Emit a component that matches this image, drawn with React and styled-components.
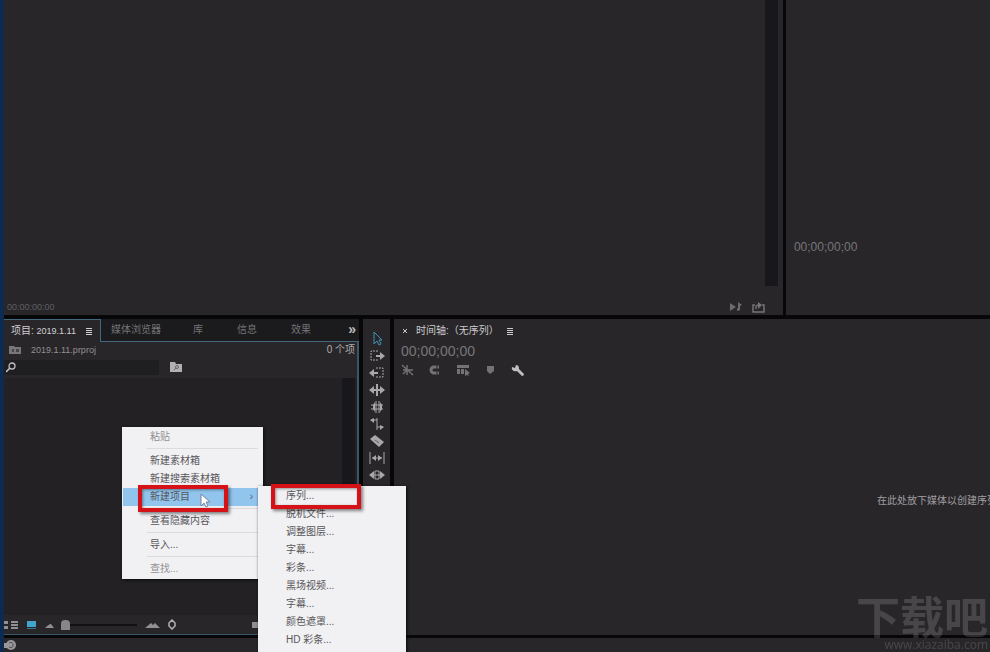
import styled, { createGlobalStyle, css } from "styled-components";

const GlobalStyle = createGlobalStyle`
  * {
    box-sizing: border-box;
  }
  body {
    margin: 0;
    overflow: hidden;
    background: #070709;
    color: #929193;
    font: 10px/18px "Liberation Sans", "Noto Sans CJK SC", sans-serif;
  }
  button,
  input {
    margin: 0;
    padding: 0;
    border: 0;
    background: none;
    color: inherit;
    font: inherit;
  }
  svg {
    display: block;
    flex: none;
  }
`;

const Window = styled.div`
  display: flex;
  flex-direction: column;
  height: 100vh;
  border-left: 4px solid #0d2b51;
  overflow: hidden;
`;

const Panel = styled.section`
  display: flex;
  flex-direction: column;
  min-width: 0;
  background: #282629;
`;

const Monitors = styled.div`
  display: flex;
  flex: 0 1 315px;
  min-height: 0;
  gap: 3px;
`;

const Source = styled(Panel)`
  flex: 0 0 79%;
`;

const SourceBody = styled.div`
  display: flex;
  flex: 1;
  justify-content: flex-end;
  padding-right: 5px;
`;

const Track = styled.div`
  width: 13px;
  margin-bottom: 13px;
  background: #18171b;
`;

const SourceBar = styled.div`
  display: flex;
  align-items: center;
  gap: 9px;
  height: 16px;
  padding: 0 18px 0 3px;
`;

const Program = styled(Panel)`
  flex: 1;
  padding: 238px 8px 0;
`;

const Timecode = styled.span`
  flex: ${({ $grow }) => ($grow ? 1 : "none")};
  color: ${({ $dim }) => ($dim ? "#5f5e61" : "#777679")};
  font-size: ${({ $size }) => $size}px;
`;

const Workspace = styled.div`
  display: flex;
  flex: 1;
  min-height: 0;
  gap: 4px;
  margin-top: 4px;
`;

const Project = styled(Panel)`
  flex: 0 0 355px;
`;

const Tabs = styled.div`
  display: flex;
  height: 23px;
  background: #1b1a1d;
`;

const Tab = styled.button`
  width: ${({ $width }) => $width}px;
  padding-left: 10px;
  border-bottom: 1px solid #41677c;
  color: #757477;
  text-align: left;
  white-space: nowrap;
  ${({ $active }) =>
    $active &&
    css`
      display: flex;
      align-items: center;
      gap: 10px;
      padding-left: 7px;
      border: 1px solid #41677c;
      border-width: 1px 1px 0 0;
      background: #282629;
      color: #d0cfd1;
    `}
`;

const MoreTabs = styled(Tab)`
  flex: 1;
  padding: 0 3px 2px 0;
  color: #bdbcbe;
  font-size: 14px;
  font-weight: 700;
  text-align: right;
`;

const Small = styled.span`
  font-size: 9px;
`;

const ProjectBody = styled.div`
  display: flex;
  flex: 1;
  flex-direction: column;
  min-height: 0;
  border-right: 2px solid #385767;
  border-bottom: 1px solid #385767;
`;

const PathRow = styled.div`
  display: flex;
  align-items: center;
  gap: 10px;
  height: 16px;
  padding: 0 2px 0 5px;
`;

const Count = styled.span`
  margin-left: auto;
  color: #b0afb1;
`;

const SearchRow = styled.div`
  display: flex;
  align-items: center;
  gap: 11px;
  height: 18px;
`;

const SearchBox = styled.label`
  display: flex;
  align-items: center;
  width: 155px;
  height: 15px;
  padding-left: 2px;
  background: #1f1e21;

  input {
    width: 130px;
    outline: 0;
  }
`;

const Bin = styled.div`
  position: relative;
  flex: 1;
  margin-top: 2px;
  padding-right: 2px;
  background: #232124;

  ${Track} {
    height: 100%;
    margin: 0 0 0 auto;
  }
`;

const Footer = styled.div`
  display: flex;
  align-items: center;
  height: 19px;
  color: #909092;
`;

const IconButton = styled.button`
  display: flex;
  flex: none;
  margin-left: ${({ $gap = 0 }) => $gap}px;
`;

const Zoom = styled.input`
  appearance: none;
  width: 76px;
  height: 12px;
  margin: 0 8px 0 6px;

  &::-webkit-slider-runnable-track {
    height: 2px;
    background: #111013;
  }
  &::-webkit-slider-thumb {
    appearance: none;
    width: 9px;
    height: 10px;
    margin-top: -4px;
    border-radius: 4px 4px 0 0;
    background: #87868a;
  }
`;

const Tools = styled(Panel)`
  flex: 0 0 27px;
  align-items: center;
  gap: 1px;
  padding-top: 12px;
  color: #a8a7a9;
`;

const Timeline = styled(Panel)`
  flex: 1;
`;

const TimelineTitle = styled.div`
  display: flex;
  align-items: center;
  gap: 8px;
  height: 23px;
  padding-left: 8px;
  color: #cccbcd;
`;

const TimelineTime = styled.div`
  height: 19px;
  padding-left: 7px;
`;

const TimelineTools = styled.div`
  display: flex;
  align-items: center;
  gap: 14px;
  height: 18px;
  padding-left: 7px;
  color: #737275;
`;

const DropHint = styled.p`
  margin: 113px 0 0;
  padding-left: 483px;
  overflow: hidden;
  color: #a09fa1;
  white-space: nowrap;
`;

const StatusBar = styled.footer`
  flex: none;
  height: 14px;
  margin-top: 3px;
  padding: 1px 0;
  background: #282629;
  color: #98979a;
`;

const Menu = styled.div`
  position: absolute;
  top: ${({ $top }) => $top}px;
  left: ${({ $left }) => $left}px;
  z-index: 2;
  width: ${({ $width }) => $width}px;
  padding: 1px;
  background: #f1f0f2;
  color: #57565a;
  box-shadow: 1px 1px 3px #09090b;
`;

const MenuRow = styled.div`
  position: relative;
`;

const MenuItem = styled.button`
  display: flex;
  justify-content: space-between;
  width: 100%;
  height: 18px;
  padding: 0 9px 0 27px;
  color: ${({ disabled }) => (disabled ? "#929195" : "inherit")};
  white-space: nowrap;
  ${({ $active }) =>
    $active &&
    css`
      background: #91c5ee;
    `}
`;

const Separator = styled.hr`
  height: 1px;
  margin: 2px 4px 3px 24px;
  border: 0;
  background: #dcdbde;
`;

const Marker = styled.div`
  position: absolute;
  top: -3px;
  left: ${({ $left }) => $left}px;
  z-index: 3;
  width: 90px;
  height: ${({ $height }) => $height}px;
  border: 4px solid #d51218;
  box-shadow: 2px 2px 3px #0007, inset 1px 1px 3px #0006;
  pointer-events: none;
`;

const Pointer = styled.svg`
  position: absolute;
  top: 5px;
  left: 77px;
  z-index: 4;
`;

const Watermark = styled.div`
  position: fixed;
  right: 2px;
  bottom: 0;
  color: #ffffff26;
  text-align: right;
`;

const WatermarkName = styled.div`
  font: 700 44px/46px "Noto Sans CJK SC", sans-serif;
`;

const WatermarkUrl = styled.div`
  font: 12px/14px "Open Sans", sans-serif;
`;

const TOOLS = [
  { name: "选择工具", draw: <path d="M5 1v12l3-3 2 4 2-1-2-4h3z" stroke="#3d93b5" /> },
  {
    name: "向前选择轨道",
    draw: (
      <>
        <path d="M9 3H2v9h7" strokeDasharray="2 1" />
        <path d="M7 7h5v2H7zm4-3 5 4-5 4z" fill="currentColor" stroke="none" />
      </>
    ),
  },
  {
    name: "向后选择轨道",
    draw: (
      <>
        <path d="M7 3h7v9H7" strokeDasharray="2 1" />
        <path d="M9 7H4v2h5zM5 4 0 8l5 4z" fill="currentColor" stroke="none" />
      </>
    ),
  },
  {
    name: "波纹编辑",
    draw: (
      <>
        <path d="M8 2v12M2 8h12" strokeWidth="2" />
        <path d="M5 4v8L0 8zm6 0v8l5-4z" fill="currentColor" stroke="none" />
      </>
    ),
  },
  {
    name: "滚动编辑",
    draw: (
      <>
        <path d="M2 6h12M2 10h12M7 2v12M10 2v12" />
        <path d="M6 3v10L4 10V6zm5 0v10l2-3V6z" fill="currentColor" stroke="none" />
      </>
    ),
  },
  {
    name: "比率拉伸",
    draw: (
      <>
        <path d="M8 2v12M2 4h6M8 11h6" />
        <path d="M5 2v5L1 4zm6 7v5l4-3z" fill="currentColor" stroke="none" />
      </>
    ),
  },
  {
    name: "剃刀工具",
    draw: (
      <>
        <path d="m1 6 5-4 9 7-5 5z" fill="currentColor" stroke="none" />
        <path d="m6 7 4 3" stroke="#5d5c5f" />
      </>
    ),
  },
  {
    name: "外滑工具",
    draw: (
      <>
        <path d="M1 2v12M15 2v12M3 8h10" />
        <path d="M7 5v6L3 8zm2 0v6l4-3z" fill="currentColor" stroke="none" />
      </>
    ),
  },
  {
    name: "内滑工具",
    draw: (
      <>
        <path d="M6 4h4v8H6zM2 8h12" />
        <path d="M5 4v8L0 8zm6 0v8l5-4z" fill="currentColor" stroke="none" />
      </>
    ),
  },
];

const NEW_ITEMS = [
  "序列...",
  "脱机文件...",
  "调整图层...",
  "字幕...",
  "彩条...",
  "黑场视频...",
  "字幕...",
  "颜色遮罩...",
  "HD 彩条...",
  "通用倒计时片头...",
];

function Icon({ w = 12, h = 12, children }) {
  return (
    <svg width={w} height={h} viewBox={`0 0 ${w} ${h}`} fill="currentColor" aria-hidden="true">
      {children}
    </svg>
  );
}

function Lines() {
  return (
    <Icon w={7} h={8}>
      <path d="M0 1h6v1H0zm0 2h6v1H0zm0 2h6v1H0zm0 2h6v1H0z" />
    </Icon>
  );
}

function NewItemMenu() {
  return (
    <Menu $top={-2} $left={135} $width={148}>
      {NEW_ITEMS.map((name, i) => (
        <MenuRow key={i}>
          <MenuItem>{name}</MenuItem>
          {i === 0 && <Marker $left={12} $height={25} />}
        </MenuRow>
      ))}
    </Menu>
  );
}

function ContextMenu() {
  return (
    <Menu $top={49} $left={118} $width={141}>
      <MenuItem disabled>粘贴</MenuItem>
      <Separator />
      <MenuItem>新建素材箱</MenuItem>
      <MenuItem>新建搜索素材箱</MenuItem>
      <MenuRow>
        <MenuItem $active>
          新建项目 <span>›</span>
        </MenuItem>
        <Marker $left={15} $height={27} />
        <Pointer width="12" height="15" viewBox="0 0 12 15">
          <path d="M1 1v12l3-3 2 4 2-1-2-4h4z" fill="#fff" stroke="#77839a" />
        </Pointer>
        <NewItemMenu />
      </MenuRow>
      <Separator />
      <MenuItem>查看隐藏内容</MenuItem>
      <Separator />
      <MenuItem>导入...</MenuItem>
      <Separator />
      <MenuItem disabled>查找...</MenuItem>
    </Menu>
  );
}

function ProjectPanel() {
  return (
    <Project>
      <Tabs>
        <Tab $active $width={97}>
          <span>
            项目: <Small>2019.1.11</Small>
          </span>
          <Lines />
        </Tab>
        <Tab $width={82}>媒体浏览器</Tab>
        <Tab $width={44}>库</Tab>
        <Tab $width={54}>信息</Tab>
        <Tab $width={42}>效果</Tab>
        <MoreTabs>»</MoreTabs>
      </Tabs>
      <ProjectBody>
        <PathRow>
          <Icon w={12} h={10}>
            <path d="M0 1h5l1 1h6v7H0z" opacity=".75" />
            <path d="M3 4h2v3H3zm4 0h3v3H7z" fill="#454447" />
          </Icon>
          <Small>2019.1.11.prproj</Small>
          <Count>0 个项</Count>
        </PathRow>
        <SearchRow>
          <SearchBox>
            <Icon w={12} h={12}>
              <circle cx="6" cy="5" r="3" fill="none" stroke="#c0bfc1" strokeWidth="1.3" />
              <path d="m4 7-4 4" stroke="#c0bfc1" strokeWidth="1.6" />
            </Icon>
            <input aria-label="搜索" />
          </SearchBox>
          <IconButton aria-label="从查询创建新的搜索素材箱">
            <Icon w={12} h={10}>
              <path d="M0 0h5l1 2h6v8H0z" fill="#b1b0b3" />
              <circle cx="7" cy="5" r="1.5" fill="none" stroke="#68676a" />
              <path d="M6 6 4 8" stroke="#68676a" />
            </Icon>
          </IconButton>
        </SearchRow>
        <Bin>
          <Track />
          <ContextMenu />
        </Bin>
        <Footer>
          <IconButton aria-label="列表视图">
            <Icon w={15} h={10}>
              <path d="M0 1h4v3H0zm0 5h4v3H0zM7 1h7v2H7zm0 3h7v2H7zm0 3h7v2H7z" />
            </Icon>
          </IconButton>
          <IconButton $gap={8} aria-label="图标视图">
            <Icon w={9} h={10}>
              <path d="M0 1h9v6H0z" fill="#42a5cf" />
              <path d="M0 8h9v1H0z" fill="#347693" />
            </Icon>
          </IconButton>
          <IconButton $gap={9} aria-label="缩小">
            <Icon w={10} h={8}>
              <path d="M0 7q4-4 6-4l3 4z" />
            </Icon>
          </IconButton>
          <Zoom type="range" defaultValue="0" aria-label="缩放" />
          <IconButton aria-label="放大">
            <Icon w={15} h={8}>
              <path d="m0 7 6-5 2 2 2-2 5 5z" />
            </Icon>
          </IconButton>
          <IconButton $gap={8} aria-label="排序">
            <Icon w={8} h={11}>
              <path d="M1 4 4 1l3 3v3l-3 3-3-3z" fill="none" stroke="#b1b0b2" strokeWidth="1.5" />
            </Icon>
          </IconButton>
          <IconButton $gap={76} aria-label="自动匹配序列">
            <Icon w={8} h={8}>
              <path d="M0 1h8v6H0z" />
            </Icon>
          </IconButton>
        </Footer>
      </ProjectBody>
    </Project>
  );
}

function TimelinePanel() {
  return (
    <Timeline>
      <TimelineTitle>
        <IconButton aria-label="关闭">
          <Icon w={6} h={6}>
            <path d="m1 1 4 4m0-4L1 5" stroke="currentColor" />
          </Icon>
        </IconButton>
        <span>时间轴:（无序列）</span>
        <Lines />
      </TimelineTitle>
      <TimelineTime>
        <Timecode $size={14}>00;00;00;00</Timecode>
      </TimelineTime>
      <TimelineTools>
        <IconButton aria-label="插入嵌套">
          <Icon w={13} h={12}>
            <path
              d="m1 1 11 10M2 6h10M6 1v10M2 10l3-3"
              stroke="currentColor"
              strokeWidth="1.4"
              fill="none"
            />
          </Icon>
        </IconButton>
        <IconButton aria-label="对齐">
          <Icon w={14} h={12}>
            <path d="M11 3H6a3 3 0 0 0 0 6h5" stroke="currentColor" fill="none" strokeWidth="3" />
            <path d="M9 1v4m0 2v4" stroke="#282629" />
          </Icon>
        </IconButton>
        <IconButton aria-label="链接选择项">
          <Icon w={14} h={12}>
            <path d="M1 1h12v3H1zM1 5h3v5H1zm4 0h3v5H5zm4 0 5 4-2 1 1 2-2-1-2 1z" />
          </Icon>
        </IconButton>
        <IconButton aria-label="添加标记">
          <Icon w={13} h={12}>
            <path d="M3 2h7v5L6 10 3 7z" />
          </Icon>
        </IconButton>
        <IconButton aria-label="时间轴显示设置">
          <Icon w={13} h={13}>
            <path
              d="M5 1 4 4 1 3C0 6 3 8 6 7l5 5q2 0 2-2L8 5c0-3-1-4-3-4z"
              fill="#bfbec0"
            />
          </Icon>
        </IconButton>
      </TimelineTools>
      <DropHint>在此处放下媒体以创建序列。</DropHint>
    </Timeline>
  );
}

function App() {
  return (
    <Window>
      <GlobalStyle />
      <Monitors>
        <Source>
          <SourceBody>
            <Track />
          </SourceBody>
          <SourceBar>
            <Timecode $size={9} $dim $grow>
              00:00:00:00
            </Timecode>
            <IconButton aria-label="播放音频">
              <Icon w={13} h={10}>
                <path d="m0 1 6 4-6 4zM8 0l4 3-2 1v4l-3 1V7l1-1z" opacity=".65" />
              </Icon>
            </IconButton>
            <IconButton aria-label="导出">
              <Icon w={13} h={11}>
                <path
                  d="M3 3H1v7h11V3h-2M4 7V5q0-2 3-2"
                  stroke="#777679"
                  strokeWidth="1.4"
                  fill="none"
                />
                <path d="m6 0 4 3-4 4z" fill="#777679" />
              </Icon>
            </IconButton>
          </SourceBar>
        </Source>
        <Program>
          <Timecode $size={12}>00;00;00;00</Timecode>
        </Program>
      </Monitors>
      <Workspace>
        <ProjectPanel />
        <Tools>
          {TOOLS.map(({ name, draw }) => (
            <IconButton key={name} aria-label={name}>
              <svg width="16" height="16" viewBox="0 0 16 16" fill="none" stroke="currentColor">
                {draw}
              </svg>
            </IconButton>
          ))}
        </Tools>
        <TimelinePanel />
      </Workspace>
      <StatusBar>
        <Icon w={12} h={12}>
          <circle cx="7" cy="6" r="5" />
          <path d="M0 4h5v5H0z" />
          <path d="M5 4q4-2 4 2t-4 2" stroke="#4c4b4e" fill="none" />
        </Icon>
      </StatusBar>
      <Watermark>
        <WatermarkName>下载吧</WatermarkName>
        <WatermarkUrl>www.xiazaiba.com</WatermarkUrl>
      </Watermark>
    </Window>
  );
}

export default App;
